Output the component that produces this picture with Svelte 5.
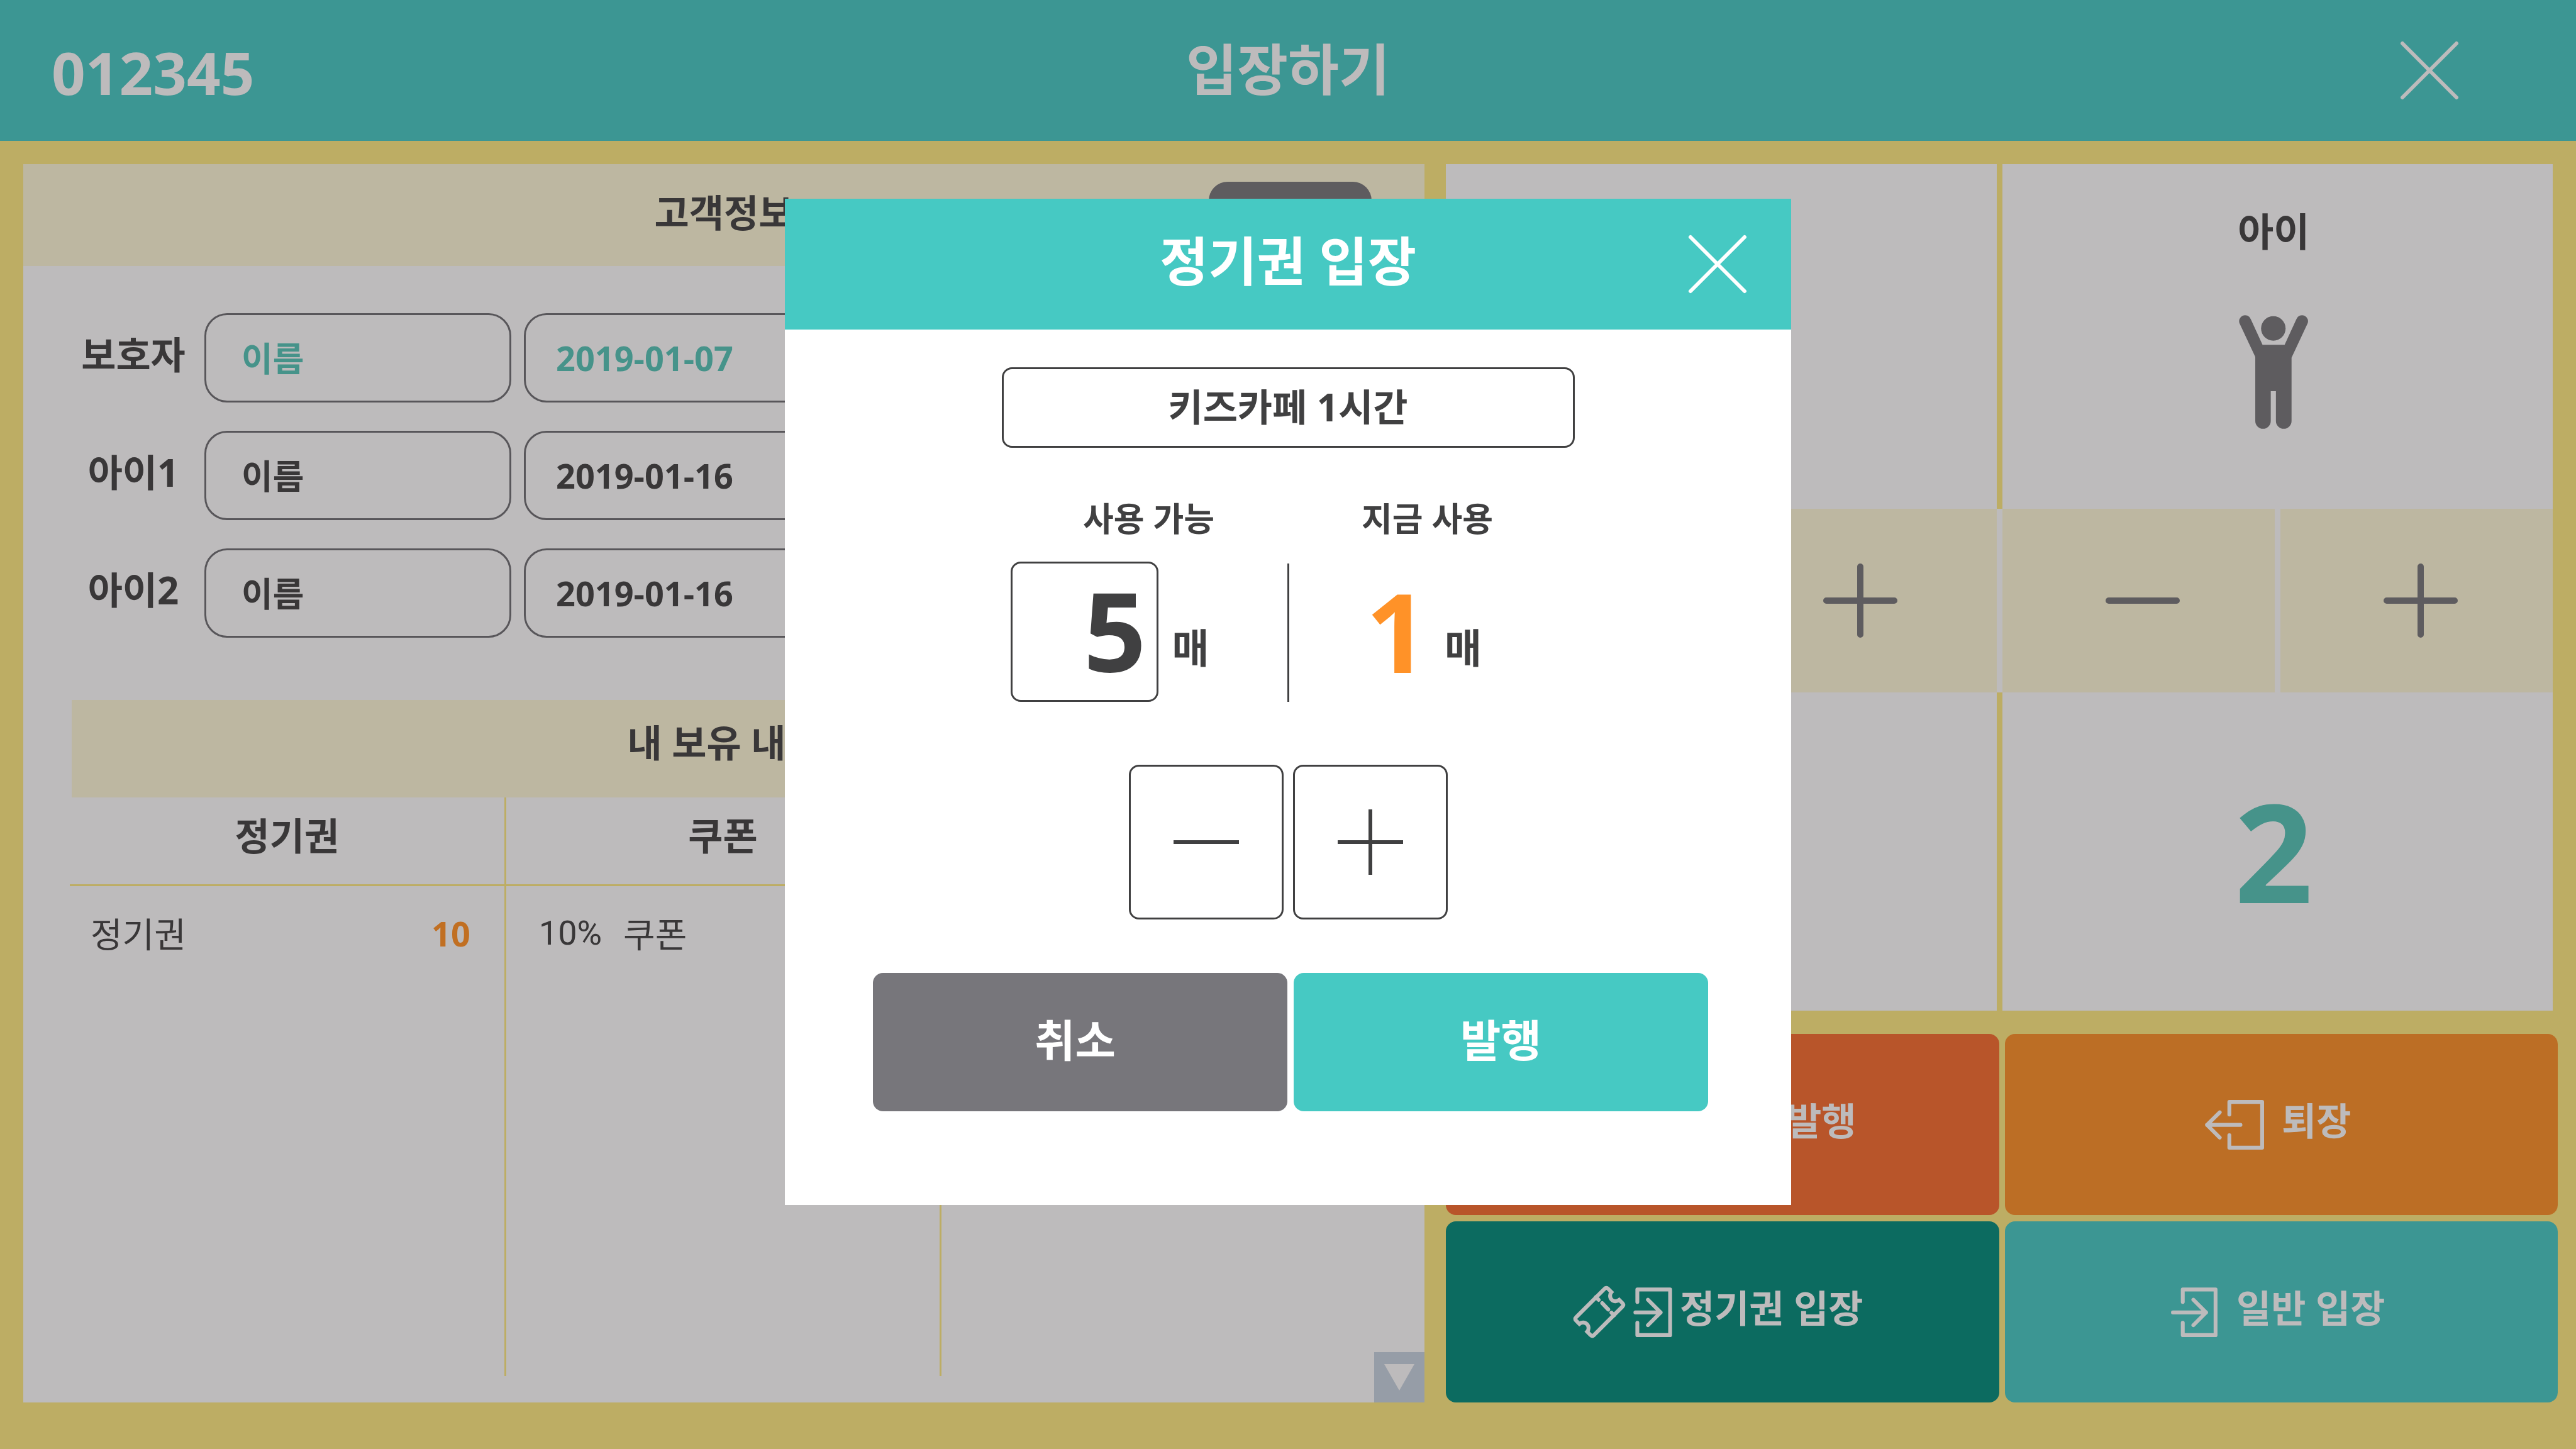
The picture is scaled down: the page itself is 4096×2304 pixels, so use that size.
<script>
  const people = [
    { id: 'guardian', label: '보호자', name: '이름', date: '2019-01-07', accent: true },
    { id: 'child1', label: '아이1', name: '이름', date: '2019-01-16', accent: false },
    { id: 'child2', label: '아이2', name: '이름', date: '2019-01-16', accent: false }
  ];

  let available = $state(5);
  let using = $state(1);

  function step(amount) {
    using = Math.min(available, Math.max(0, using + amount));
  }
</script>

{#snippet cross()}
  <svg class="cross" viewBox="0 0 94 94" aria-hidden="true">
    <path d="M4 4L90 90M90 4L4 90" />
  </svg>
{/snippet}

{#snippet ticket()}
  <svg class="ticket" viewBox="48 64 326 326" aria-hidden="true">
    <path
      d="M88 301L68 281Q57 270 68 260L244 84Q254 73 265 84L286 105A34 34 0 0 0 334 153L354 173Q364 183 354 194L178 370Q167 380 157 370L136 349A34 34 0 0 0 88 301Z"
    />
    <path class="round" d="M190 136L207 153M229 173L266 212M286 232L302 248" />
  </svg>
{/snippet}

<div class="page">
  <header class="topbar">
    <span class="member">012345</span>
    <h1>입장하기</h1>
    <button class="close" aria-label="닫기">{@render cross()}</button>
  </header>

  <main>
    <section class="customer">
      <div class="panel-head">
        <h2>고객정보</h2>
        <button class="lookup" aria-label="조회"></button>
      </div>

      <form class="people">
        {#each people as person}
          <div class="person" class:accent={person.accent}>
            <label for={person.id}>{person.label}</label>
            <input id={person.id} class="name" type="text" value={person.name} />
            <input class="date" type="text" value={person.date} aria-label={person.label} />
          </div>
        {/each}
      </form>

      <h2 class="holdings-title">내 보유 내역</h2>
      <div class="holdings-wrap">
        <table class="holdings">
          <thead>
            <tr><th>정기권</th><th>쿠폰</th><th></th></tr>
          </thead>
          <tbody>
            <tr>
              <td><div class="entry"><span>정기권</span><b>10</b></div></td>
              <td><div class="entry coupon"><span class="rate">10%</span><span>쿠폰</span></div></td>
              <td></td>
            </tr>
          </tbody>
        </table>
      </div>

      <button class="scroll" aria-label="아래로">
        <svg viewBox="0 0 48 42" aria-hidden="true"><path d="M0 0H48L24 42Z" /></svg>
      </button>
    </section>

    <section class="side">
      <div class="counters">
        <div class="pair">
          <div class="card"></div>
          <div class="card kind">
            <h3>아이</h3>
            <svg class="child" viewBox="135 98 428 706" aria-hidden="true">
              <circle cx="348" cy="181" r="76" />
              <path
                d="M139 151A37 37 0 0 1 207 121L281 282H418L492 121A37 37 0 0 1 560 151L461 362V755A48 48 0 0 1 364 755V570H332V755A48 48 0 0 1 236 755V357Z"
              />
            </svg>
          </div>
        </div>
        <div class="controls">
          {#each ['어른', '아이'] as who}
            <button aria-label="{who} 빼기">
              <svg viewBox="0 0 118 118" aria-hidden="true"><path d="M5 59H113" /></svg>
            </button>
            <button aria-label="{who} 더하기">
              <svg viewBox="0 0 118 118" aria-hidden="true"><path d="M5 59H113M59 5V113" /></svg>
            </button>
          {/each}
        </div>
        <div class="pair">
          <div class="card"></div>
          <div class="card"><output class="count">2</output></div>
        </div>
      </div>

      <div class="actions">
        <button class="issue">{@render ticket()}<span>정기권 발행</span></button>
        <button class="leave">
          <svg class="exit" viewBox="256 75 368 309" aria-hidden="true">
            <path class="round" d="M408 166V87H612V372H408V294M477 230H269M348 152L269 230L348 309" />
          </svg>
          <span>퇴장</span>
        </button>
        <button class="pass">
          {@render ticket()}
          <svg class="enter" viewBox="417 72 240 309" aria-hidden="true">
            <path class="round" d="M441 163V85H645V369H441V292M429 228H586M507 149L586 228L507 307" />
          </svg>
          <span>정기권 입장</span>
        </button>
        <button class="general">
          <svg class="enter-long" viewBox="368 72 289 309" aria-hidden="true">
            <path class="round" d="M441 163V85H645V369H441V292M380 228H586M507 149L586 228L507 307" />
          </svg>
          <span>일반 입장</span>
        </button>
      </div>
    </section>
  </main>

  <div class="overlay">
    <div class="dialog" role="dialog" aria-modal="true" aria-labelledby="dialog-title">
      <div class="dialog-head">
        <h2 id="dialog-title">정기권 입장</h2>
        <button class="close" aria-label="닫기">{@render cross()}</button>
      </div>
      <div class="dialog-body">
        <input class="product" type="text" value="키즈카페 1시간" readonly aria-label="이용권" />

        <div class="amounts">
          <div class="amount">
            <h3>사용 가능</h3>
            <div class="figure">
              <output class="boxed">{available}</output>
              <span class="unit">매</span>
            </div>
          </div>
          <div class="divider"></div>
          <div class="amount">
            <h3>지금 사용</h3>
            <div class="figure now">
              <output>{using}</output>
              <span class="unit">매</span>
            </div>
          </div>
        </div>

        <div class="stepper">
          <button aria-label="빼기" onclick={() => step(-1)}>
            <svg viewBox="0 0 104 104" aria-hidden="true"><path d="M0 52H104" /></svg>
          </button>
          <button aria-label="더하기" onclick={() => step(1)}>
            <svg viewBox="0 0 104 104" aria-hidden="true"><path d="M0 52H104M52 0V104" /></svg>
          </button>
        </div>

        <div class="confirm">
          <button class="cancel">취소</button>
          <button class="submit">발행</button>
        </div>
      </div>
    </div>
  </div>
</div>

<style>
  :global(body) {
    margin: 0;
  }

  .page,
  .page * {
    box-sizing: border-box;
  }

  .page {
    --ink: #393738;
    --panel: #bdbbbc;
    --gold: #bdad64;
    --sand: #bdb7a1;
    --teal: #3c9693;
    --grey: #5e5c5f;
    position: relative;
    display: flex;
    flex-direction: column;
    min-height: 100vh;
    background: var(--gold);
    color: var(--ink);
    font-family: 'Open Sans', 'Noto Sans CJK KR', sans-serif;
    font-size: 60px;
    font-weight: 700;
    line-height: 1;
  }

  h1,
  h2,
  h3 {
    margin: 0;
    font-size: inherit;
    font-weight: 700;
  }

  button,
  input {
    margin: 0;
    padding: 0;
    border: 0;
    background: none;
    color: inherit;
    font: inherit;
  }

  svg {
    display: block;
    flex: none;
  }

  svg path {
    stroke-width: 24;
  }

  .round {
    stroke-linecap: round;
    stroke-linejoin: round;
  }

  .cross {
    width: 94px;
    height: 94px;
    fill: none;
    stroke: currentColor;
    stroke-linecap: round;
  }

  .cross path {
    stroke-width: 6;
  }

  .topbar {
    display: grid;
    grid-template-columns: 1fr auto 1fr;
    align-items: center;
    height: 224px;
    padding: 0 186px 0 82px;
    background: var(--teal);
    color: var(--panel);
  }

  .member {
    padding-top: 6px;
    font-size: 94px;
  }

  h1 {
    padding: 0 0 6px 104px;
    font-size: 88px;
  }

  .topbar .close {
    justify-self: end;
  }

  main {
    display: grid;
    flex: 1;
    grid-template-columns: 2228fr 1768fr;
    gap: 34px;
    padding: 37px 29px 74px 37px;
  }

  .customer {
    position: relative;
    display: flex;
    flex-direction: column;
    padding-bottom: 42px;
    background: var(--panel);
  }

  .panel-head {
    display: grid;
    grid-template-columns: 1fr auto 1fr;
    align-items: center;
    height: 162px;
    padding: 0 84px;
    background: var(--sand);
  }

  .panel-head h2 {
    grid-column: 2;
    padding-bottom: 8px;
  }

  .lookup {
    justify-self: end;
    width: 259px;
    height: 106px;
    border-radius: 30px;
    background: var(--grey);
  }

  .people {
    display: flex;
    flex-direction: column;
    gap: 45px;
    padding: 75px 88px 99px;
  }

  .person {
    display: flex;
    align-items: center;
  }

  .person label {
    width: 174px;
    margin-right: 26px;
    padding-bottom: 10px;
    text-align: center;
    white-space: nowrap;
  }

  .person input {
    width: 488px;
    height: 142px;
    padding-bottom: 4px;
    border: 3px solid #58565a;
    border-radius: 36px;
  }

  .person .name {
    padding-left: 56px;
    font-size: 54px;
  }

  .person .date {
    margin-left: 20px;
    padding: 0 0 0 48px;
    font-size: 54px;
  }

  .accent input {
    color: #46938a;
  }

  .holdings-title {
    margin: 0 77px;
    padding: 38px 0 57px;
    background: var(--sand);
    text-align: center;
  }

  .holdings-wrap {
    display: grid;
    flex: 1;
    padding: 0 77px 0 74px;
  }

  .holdings {
    width: 100%;
    border-collapse: collapse;
    table-layout: fixed;
  }

  .holdings th {
    height: 139px;
    padding: 0 0 16px;
    border-bottom: 3px solid var(--gold);
  }

  .holdings td {
    padding: 48px 54px 0 33px;
    vertical-align: top;
    font-size: 55px;
    font-weight: 400;
  }

  .holdings th + th,
  .holdings td + td {
    border-left: 3px solid var(--gold);
  }

  .holdings td + td {
    padding-left: 52px;
  }

  .entry {
    display: flex;
    justify-content: space-between;
  }

  .coupon {
    justify-content: flex-start;
    gap: 34px;
  }

  .rate {
    font-family: Roboto, sans-serif;
    font-size: 54px;
  }

  .entry b {
    color: #c16f22;
    font-size: 54px;
  }

  .scroll {
    position: absolute;
    right: 0;
    bottom: 0;
    display: grid;
    place-items: center;
    width: 80px;
    height: 80px;
    background: #969da7;
  }

  .scroll svg {
    width: 48px;
    height: 42px;
    fill: var(--panel);
  }

  .side {
    display: flex;
    flex-direction: column;
    gap: 37px;
  }

  .counters {
    display: grid;
    flex: 1;
    grid-template-rows: 548fr 291fr 506fr;
    margin-right: 8px;
  }

  .pair {
    display: grid;
    grid-template-columns: 1fr 1fr;
    gap: 9px;
  }

  .card {
    display: flex;
    flex-direction: column;
    align-items: center;
    justify-content: center;
    padding-right: 12px;
    background: var(--panel);
  }

  .kind {
    justify-content: flex-start;
    gap: 102px;
    padding-top: 76px;
  }

  .kind h3 {
    font-size: 62px;
  }

  .child {
    width: 110px;
    height: 181px;
    fill: var(--grey);
  }

  .count {
    padding-bottom: 4px;
    color: #46938a;
    font-size: 218px;
  }

  .controls {
    display: grid;
    grid-template-columns: repeat(4, 1fr);
    gap: 9px;
    background: var(--panel);
  }

  .controls button {
    display: grid;
    place-items: center;
    background: var(--sand);
  }

  .controls button:nth-child(n + 3) {
    padding-left: 14px;
  }

  .controls svg {
    width: 118px;
    height: 118px;
    fill: none;
    stroke: var(--grey);
    stroke-linecap: round;
  }

  .controls path {
    stroke-width: 10;
  }

  .actions {
    display: grid;
    grid-template-columns: 1fr 1fr;
    grid-auto-rows: 288px;
    gap: 10px 9px;
  }

  .actions button {
    display: flex;
    align-items: center;
    justify-content: center;
    padding-right: 10px;
    border-radius: 16px;
    color: var(--panel);
    white-space: nowrap;
  }

  .actions svg {
    height: 79px;
    fill: none;
    stroke: currentColor;
  }

  .actions span {
    padding-bottom: 12px;
  }

  .actions .ticket {
    width: 84px;
    height: 84px;
  }

  .exit {
    width: 94px;
  }

  .enter {
    width: 62px;
  }

  .enter-long {
    width: 74px;
  }

  .issue {
    gap: 60px;
    background: #b8552a;
  }

  .leave {
    gap: 28px;
    background: #bc6e25;
  }

  .actions .pass {
    gap: 12px;
    padding-right: 14px;
    background: #0c6b60;
  }

  .general {
    gap: 30px;
    background: var(--teal);
  }

  .overlay {
    position: absolute;
    inset: 0;
    display: flex;
    align-items: flex-start;
    justify-content: center;
    padding-top: 316px;
  }

  .dialog {
    width: 1600px;
    background: #fff;
    color: #404041;
  }

  .dialog-head {
    display: grid;
    grid-template-columns: 1fr auto 1fr;
    align-items: center;
    height: 208px;
    padding: 0 70px;
    background: #46c9c3;
    color: #fff;
  }

  .dialog-head h2 {
    grid-column: 2;
    padding-bottom: 10px;
    font-size: 84px;
  }

  .dialog-head .close {
    justify-self: end;
  }

  .dialog-body {
    display: flex;
    flex-direction: column;
    align-items: center;
    padding: 60px 132px 149px;
  }

  .product {
    width: 911px;
    height: 128px;
    padding-bottom: 8px;
    border: 3px solid #404041;
    border-radius: 16px;
    text-align: center;
  }

  .amounts {
    display: flex;
    align-items: flex-end;
    padding-top: 86px;
  }

  .amount {
    width: 440px;
  }

  .amount h3 {
    margin-bottom: 42px;
    font-size: 53px;
    text-align: center;
  }

  .divider {
    width: 3px;
    height: 220px;
    background: #404041;
  }

  .figure {
    display: flex;
    align-items: center;
    height: 223px;
    font-size: 174px;
  }

  .figure output {
    padding-bottom: 4px;
  }

  .figure .boxed {
    width: 235px;
    height: 223px;
    padding: 18px 16px 0 0;
    border: 3px solid #404041;
    border-radius: 16px;
    text-align: right;
  }

  .unit {
    padding: 50px 0 0 22px;
    font-size: 64px;
  }

  .now {
    padding-left: 122px;
  }

  .now output {
    color: #ff9228;
  }

  .now .unit {
    padding-left: 26px;
  }

  .stepper {
    display: flex;
    gap: 15px;
    padding-top: 100px;
  }

  .stepper button {
    display: grid;
    place-items: center;
    width: 246px;
    height: 246px;
    border: 3px solid #404041;
    border-radius: 16px;
  }

  .stepper svg {
    width: 104px;
    height: 104px;
    stroke: #404041;
  }

  .stepper path {
    stroke-width: 6;
  }

  .confirm {
    display: grid;
    grid-template-columns: 1fr 1fr;
    align-self: stretch;
    gap: 10px;
    padding: 85px 0 0 8px;
  }

  .confirm button {
    height: 220px;
    padding-bottom: 6px;
    border-radius: 16px;
    color: #fff;
    font-size: 70px;
  }

  .confirm .cancel {
    padding-right: 16px;
    background: #77767b;
  }

  .submit {
    background: #46c9c3;
  }
</style>
